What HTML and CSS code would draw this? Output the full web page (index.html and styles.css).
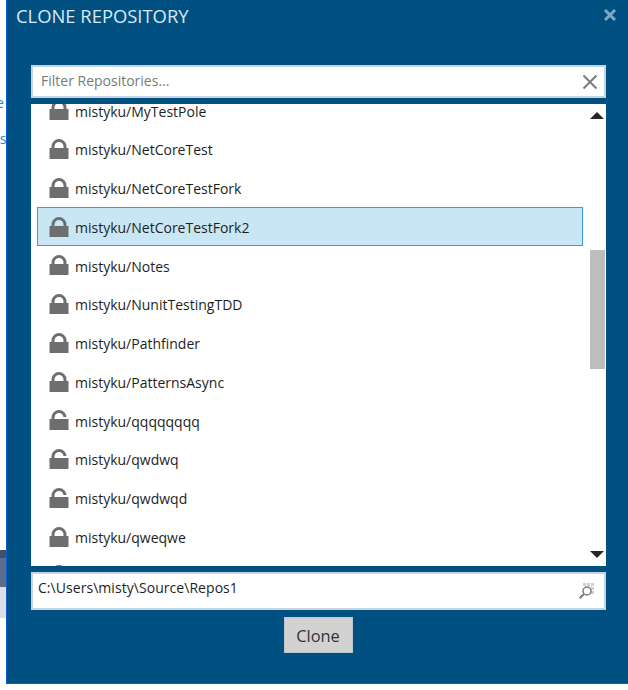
FILE: index.html
```html
<!DOCTYPE html>
<html lang="en">
<head>
<meta charset="utf-8">
<title>Clone Repository</title>
<link rel="stylesheet" href="styles.css">
</head>
<body>
<svg class="defs" width="0" height="0" aria-hidden="true">
  <symbol id="locked" viewBox="0 0 20 22">
    <path d="M.5 10h19v11H.5z M2.5 10V8.5a7.5 7.5 0 0 1 15 0V10h-3V8.5a4.5 4.5 0 0 0-9 0V10z" fill="#6e6e6e"/>
  </symbol>
  <symbol id="unlocked" viewBox="0 0 20 22">
    <path d="M.5 10h19v11H.5z M2.5 10V8.5a7.5 7.5 0 0 1 15 0V8h-3v.5a4.5 4.5 0 0 0-9 0V10z" fill="#6e6e6e"/>
  </symbol>
</svg>
<div class="backdrop">
  <div class="peek">
    <span class="peek-a">e</span>
    <span class="peek-b">es</span>
  </div>
  <div class="peek-block">
    <div class="pb-dark"></div>
    <div class="pb-mid"></div>
    <div class="pb-light"></div>
  </div>
</div>
<main class="dialog">
  <header class="head">
    <h1 class="title">CLONE REPOSITORY</h1>
    <svg class="close" viewBox="0 0 14 14" width="14" height="14"><path d="M2 2l10 10M12 2L2 12" stroke="#7fa8c4" stroke-width="3"/></svg>
  </header>
  <div class="filter">
    <span class="placeholder">Filter Repositories...</span>
    <svg class="clear" viewBox="0 0 16 16" width="16" height="16"><path d="M1.5 1.5l13 13M14.5 1.5l-13 13" stroke="#7b7b7b" stroke-width="2"/></svg>
  </div>
  <div class="list">
    <div class="rows">
      <div class="row"><svg class="lock"><use href="#locked"/></svg><span>mistyku/MyTestPole</span></div>
      <div class="row"><svg class="lock"><use href="#locked"/></svg><span>mistyku/NetCoreTest</span></div>
      <div class="row"><svg class="lock"><use href="#locked"/></svg><span>mistyku/NetCoreTestFork</span></div>
      <div class="row selected"><svg class="lock"><use href="#locked"/></svg><span>mistyku/NetCoreTestFork2</span></div>
      <div class="row"><svg class="lock"><use href="#locked"/></svg><span>mistyku/Notes</span></div>
      <div class="row"><svg class="lock"><use href="#locked"/></svg><span>mistyku/NunitTestingTDD</span></div>
      <div class="row"><svg class="lock"><use href="#locked"/></svg><span>mistyku/Pathfinder</span></div>
      <div class="row"><svg class="lock"><use href="#locked"/></svg><span>mistyku/PatternsAsync</span></div>
      <div class="row"><svg class="lock"><use href="#unlocked"/></svg><span>mistyku/qqqqqqqq</span></div>
      <div class="row"><svg class="lock"><use href="#unlocked"/></svg><span>mistyku/qwdwq</span></div>
      <div class="row"><svg class="lock"><use href="#unlocked"/></svg><span>mistyku/qwdwqd</span></div>
      <div class="row"><svg class="lock"><use href="#locked"/></svg><span>mistyku/qweqwe</span></div>
      <div class="row"><svg class="lock"><use href="#locked"/></svg></div>
    </div>
    <div class="scroll">
      <div class="arrow up"></div>
      <div class="track"><div class="thumb"></div></div>
      <div class="arrow down"></div>
    </div>
  </div>
  <div class="path">
    <span>C:\Users\misty\Source\Repos1</span>
    <svg class="browse" viewBox="0 0 16 16" width="16" height="16">
      <path d="M4 0h3v3H4zM8 0h3v3H8zM12 0h3v3h-3zM12 4h3v3h-3zM12 8h3v3h-3z" fill="#cfcfcf"/>
      <circle cx="8" cy="8" r="4" fill="#fff" stroke="#7a7a7a" stroke-width="1.5"/>
      <path d="M5 11L.7 15.3" stroke="#7a7a7a" stroke-width="2"/>
    </svg>
  </div>
  <div class="actions"><button class="clone" type="button">Clone</button></div>
</main>
</body>
</html>
```
FILE: styles.css
```css
* { box-sizing: border-box; }
html, body { margin: 0; padding: 0; }
body {
  width: 628px;
  height: 690px;
  display: flex;
  overflow: hidden;
  background: #fff;
  font-family: "Open Sans", "Noto Sans", sans-serif;
  color: #1e1e1e;
}
.defs { position: absolute; }
.backdrop {
  width: 6px;
  flex: none;
  overflow: hidden;
  padding-top: 95px;
  color: #1e88d8;
  font-size: 14px;
}
.peek { height: 455px; overflow: hidden; }
.peek-a, .peek-b { display: block; margin-left: -4px; height: 36px; line-height: 16px; }
.peek-b { margin-left: -8px; }
.pb-dark { height: 8px; background: #3f4f6e; }
.pb-mid { height: 29px; background: #5d6d8e; }
.pb-light { height: 31px; background: #dadfea; }
.dialog {
  width: 622px;
  height: 684px;
  flex: none;
  background: #005082;
  border-left: 1px solid #0a60d0;
  border-bottom: 1px solid #0a60d0;
  padding: 0 22px 0 24px;
}
.head {
  height: 65px;
  display: flex;
  justify-content: space-between;
  align-items: flex-start;
  margin-right: -11px;
  margin-left: -15px;
  padding-top: 4px;
}
.title {
  margin: 0;
  font-size: 18.4px;
  font-weight: 400;
  line-height: 24px;
  color: #dbe8f0;
}
.close { margin-top: 4px; }
.filter {
  height: 33px;
  background: #fff;
  border: 2px solid #c6d4e0;
  display: flex;
  align-items: center;
  justify-content: space-between;
  padding: 0 6px 2px 8px;
  font-size: 14px;
  color: #7a7a7a;
}
.clear { margin-top: 3px; }
.list {
  margin-top: 6px;
  height: 462px;
  background: #fff;
  display: flex;
  overflow: hidden;
}
.rows {
  width: 552px;
  flex: none;
  margin-top: -13px;
  padding-left: 6px;
}
.row {
  height: 38.75px;
  display: flex;
  align-items: center;
  padding-left: 11px;
  font-size: 14px;
  border: 1px solid transparent;
}
.row span { margin-top: 1.5px; }
.row.selected {
  background: #c9e6f5;
  border-color: #3c9cdc;
}
.lock { width: 20px; height: 22px; margin-right: 6px; flex: none; }
.scroll {
  width: 23px;
  flex: none;
  padding: 8px 0 8px 7px;
  display: flex;
  flex-direction: column;
}
.arrow {
  width: 0;
  height: 0;
  border-left: 7px solid transparent;
  border-right: 7px solid transparent;
  margin-left: 0;
}
.arrow.up { border-bottom: 7px solid #262626; }
.arrow.down { border-top: 7px solid #262626; }
.track { flex: 1; padding-top: 131px; }
.thumb { width: 15px; height: 119px; background: #bdbdbd; }
.path {
  margin-top: 6px;
  height: 38px;
  background: #fff;
  border: 2px solid #c6d4e0;
  display: flex;
  justify-content: space-between;
  padding: 4px 9px 0 6px;
  font-size: 14px;
  letter-spacing: 0.05px;
  color: #1e1e1e;
}
.path span { margin-left: -1px; }
.browse { margin-top: 5px; }
.actions {
  display: flex;
  justify-content: center;
  margin-top: 7px;
}
.clone {
  width: 69px;
  height: 36px;
  margin-right: 1px;
  background: #d2d2d2;
  border: 1px solid #bcc4cc;
  font: inherit;
  font-size: 16.4px;
  color: #333;
  padding: 0;
}
```
